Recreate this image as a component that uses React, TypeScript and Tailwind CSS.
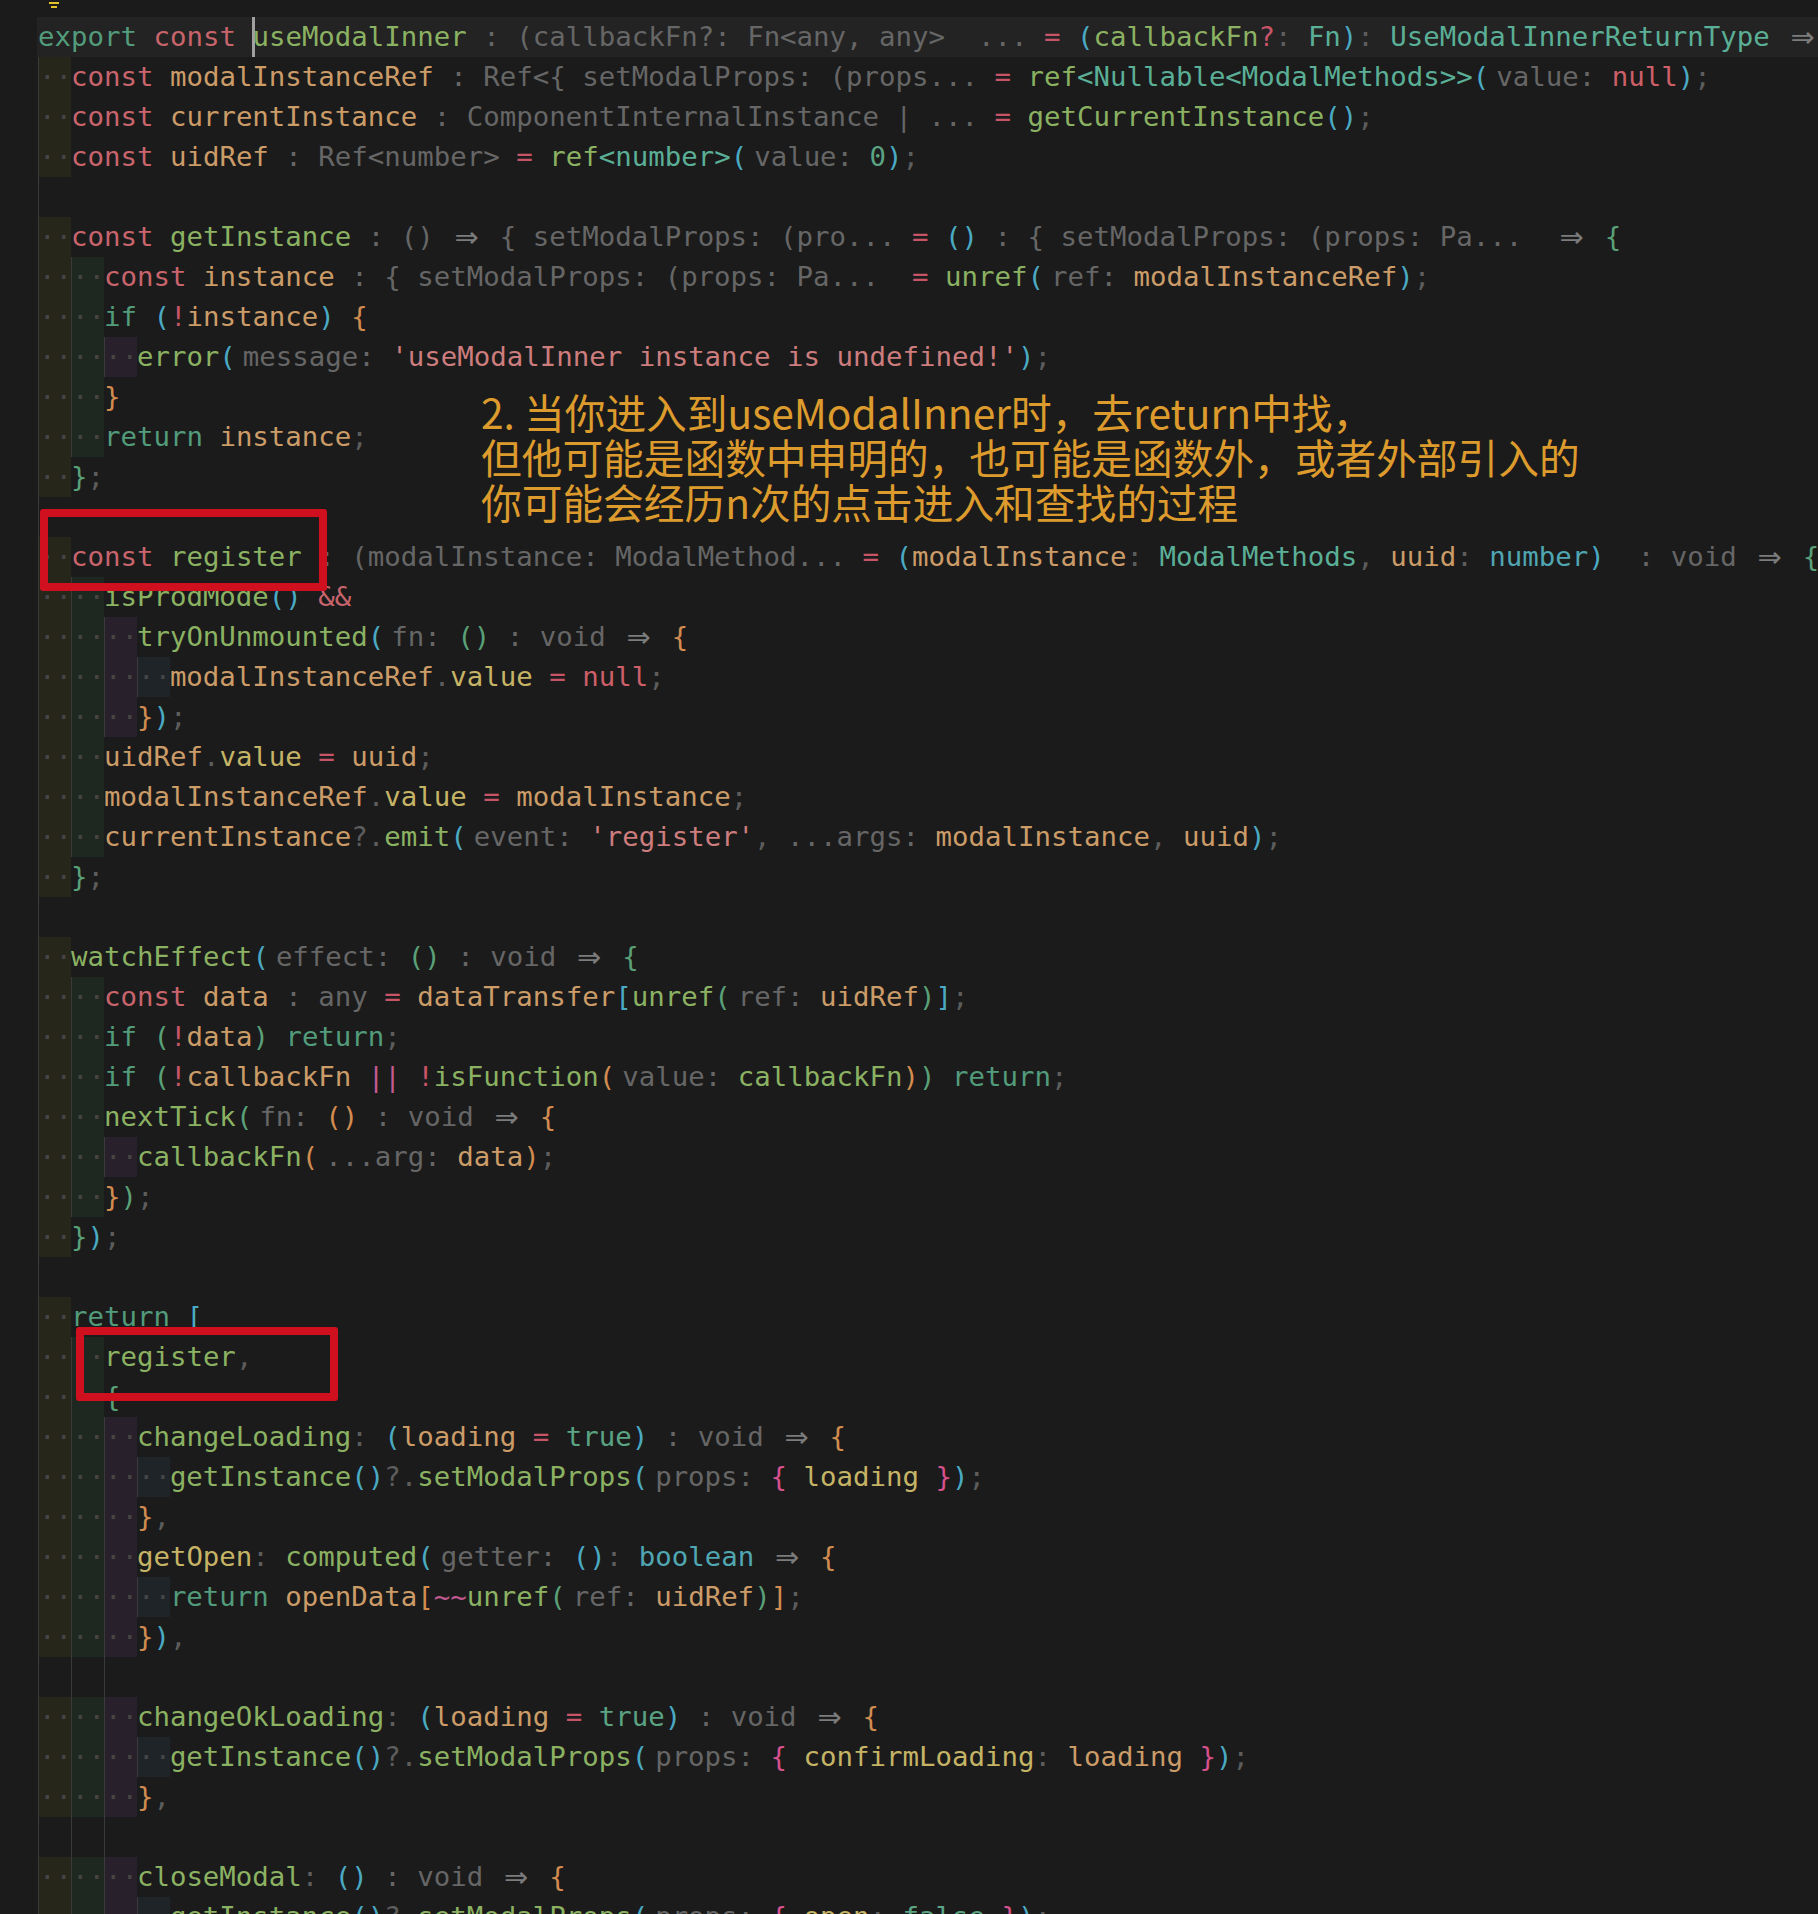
import React from 'react';

type Seg = [string, string];
type Line = { i: number; s: Seg[] };

// token colours, editor theme
const C: Record<string, string> = {
  '': '',
  kw: 'text-[#c8646c]',
  ct: 'text-[#529b7b]',
  fn: 'text-[#8bb262]',
  v: 'text-[#cc9c68]',
  pr: 'text-[#c6b466]',
  ty: 'text-[#5aaf96]',
  tb: 'text-[#50a6b2]',
  h: 'text-[#666666]',
  p: 'text-[#5d5d5d]',
  op: 'text-[#c85468]',
  op2: 'text-[#c45a92]',
  s: 'text-[#cd7d7d]',
  nl: 'text-[#cc5f68]',
  bo: 'text-[#5aa383]',
  b1: 'text-[#4baac3]',
  b2: 'text-[#d28c50]',
  b3: 'text-[#5aa078]',
  b4: 'text-[#d7508c]',
};

const rainbow = ['bg-[#26261b]', 'bg-[#1e2820]', 'bg-[#28202a]', 'bg-[#1e2428]'];

const voidHint: Seg[] = [['h', ' : void '], ['ar', ''], ['', ' ']];

const lines: Line[] = [
  { i: 0, s: [['ct', 'export'], ['', ' '], ['kw', 'const'], ['', ' '], ['cur', ''], ['fn', 'useModalInner'], ['h', ' : (callbackFn?: Fn<any, any>  ... '], ['op', '='], ['', ' '], ['b1', '('], ['fn', 'callbackFn'], ['op', '?'], ['p', ':'], ['', ' '], ['ty', 'Fn'], ['b1', ')'], ['p', ':'], ['', ' '], ['ty', 'UseModalInnerReturnType'], ['', ' '], ['ar', '']] },
  { i: 1, s: [['kw', 'const'], ['', ' '], ['v', 'modalInstanceRef'], ['h', ' : Ref<{ setModalProps: (props... '], ['op', '='], ['', ' '], ['fn', 'ref'], ['ty', '<Nullable<ModalMethods>>'], ['b1', '('], ['ph', 'value:'], ['', ' '], ['nl', 'null'], ['b1', ')'], ['p', ';']] },
  { i: 1, s: [['kw', 'const'], ['', ' '], ['v', 'currentInstance'], ['h', ' : ComponentInternalInstance | ... '], ['op', '='], ['', ' '], ['fn', 'getCurrentInstance'], ['b1', '()'], ['p', ';']] },
  { i: 1, s: [['kw', 'const'], ['', ' '], ['v', 'uidRef'], ['h', ' : Ref<number> '], ['op', '='], ['', ' '], ['fn', 'ref'], ['ty', '<number>'], ['b1', '('], ['ph', 'value:'], ['', ' '], ['bo', '0'], ['b1', ')'], ['p', ';']] },
  { i: 1, s: [] },
  { i: 1, s: [['kw', 'const'], ['', ' '], ['fn', 'getInstance'], ['h', ' : () '], ['ar', ''], ['h', ' { setModalProps: (pro... '], ['op', '='], ['', ' '], ['b1', '()'], ['h', ' : { setModalProps: (props: Pa...  '], ['ar', ''], ['', ' '], ['b3', '{']] },
  { i: 2, s: [['kw', 'const'], ['', ' '], ['v', 'instance'], ['h', ' : { setModalProps: (props: Pa...  '], ['op', '='], ['', ' '], ['fn', 'unref'], ['b1', '('], ['ph', 'ref:'], ['', ' '], ['v', 'modalInstanceRef'], ['b1', ')'], ['p', ';']] },
  { i: 2, s: [['ct', 'if'], ['', ' '], ['b1', '('], ['op', '!'], ['v', 'instance'], ['b1', ')'], ['', ' '], ['b2', '{']] },
  { i: 3, s: [['fn', 'error'], ['b1', '('], ['ph', 'message:'], ['', ' '], ['s', "'useModalInner instance is undefined!'"], ['b1', ')'], ['p', ';']] },
  { i: 2, s: [['b2', '}']] },
  { i: 2, s: [['ct', 'return'], ['', ' '], ['v', 'instance'], ['p', ';']] },
  { i: 1, s: [['b3', '}'], ['p', ';']] },
  { i: 1, s: [] },
  { i: 1, s: [['kw', 'const'], ['', ' '], ['fn', 'register'], ['h', ' : (modalInstance: ModalMethod... '], ['op', '='], ['', ' '], ['b1', '('], ['v', 'modalInstance'], ['p', ':'], ['', ' '], ['ty', 'ModalMethods'], ['p', ','], ['', ' '], ['v', 'uuid'], ['p', ':'], ['', ' '], ['tb', 'number'], ['b1', ')'], ['h', '  : void '], ['ar', ''], ['', ' '], ['b3', '{']] },
  { i: 2, s: [['fn', 'isProdMode'], ['b1', '()'], ['', ' '], ['kw', '&&']] },
  { i: 3, s: [['fn', 'tryOnUnmounted'], ['b1', '('], ['ph', 'fn:'], ['', ' '], ['b3', '()'], ...voidHint, ['b2', '{']] },
  { i: 4, s: [['v', 'modalInstanceRef'], ['p', '.'], ['pr', 'value'], ['', ' '], ['op', '='], ['', ' '], ['nl', 'null'], ['p', ';']] },
  { i: 3, s: [['b2', '}'], ['b1', ')'], ['p', ';']] },
  { i: 2, s: [['v', 'uidRef'], ['p', '.'], ['pr', 'value'], ['', ' '], ['op', '='], ['', ' '], ['v', 'uuid'], ['p', ';']] },
  { i: 2, s: [['v', 'modalInstanceRef'], ['p', '.'], ['pr', 'value'], ['', ' '], ['op', '='], ['', ' '], ['v', 'modalInstance'], ['p', ';']] },
  { i: 2, s: [['v', 'currentInstance'], ['p', '?.'], ['fn', 'emit'], ['b1', '('], ['ph', 'event:'], ['', ' '], ['s', "'register'"], ['p', ','], ['', ' '], ['h', '...args:'], ['', ' '], ['v', 'modalInstance'], ['p', ','], ['', ' '], ['v', 'uuid'], ['b1', ')'], ['p', ';']] },
  { i: 1, s: [['b3', '}'], ['p', ';']] },
  { i: 1, s: [] },
  { i: 1, s: [['fn', 'watchEffect'], ['b1', '('], ['ph', 'effect:'], ['', ' '], ['b3', '()'], ...voidHint, ['b3', '{']] },
  { i: 2, s: [['kw', 'const'], ['', ' '], ['v', 'data'], ['h', ' : any '], ['op', '='], ['', ' '], ['v', 'dataTransfer'], ['b1', '['], ['fn', 'unref'], ['b3', '('], ['ph', 'ref:'], ['', ' '], ['v', 'uidRef'], ['b3', ')'], ['b1', ']'], ['p', ';']] },
  { i: 2, s: [['ct', 'if'], ['', ' '], ['b3', '('], ['op', '!'], ['v', 'data'], ['b3', ')'], ['', ' '], ['ct', 'return'], ['p', ';']] },
  { i: 2, s: [['ct', 'if'], ['', ' '], ['b3', '('], ['op', '!'], ['v', 'callbackFn'], ['', ' '], ['op2', '||'], ['', ' '], ['op', '!'], ['fn', 'isFunction'], ['b2', '('], ['ph', 'value:'], ['', ' '], ['fn', 'callbackFn'], ['b2', ')'], ['b3', ')'], ['', ' '], ['ct', 'return'], ['p', ';']] },
  { i: 2, s: [['fn', 'nextTick'], ['b3', '('], ['ph', 'fn:'], ['', ' '], ['b2', '()'], ...voidHint, ['b2', '{']] },
  { i: 3, s: [['fn', 'callbackFn'], ['b2', '('], ['ph', '...arg:'], ['', ' '], ['v', 'data'], ['b2', ')'], ['p', ';']] },
  { i: 2, s: [['b2', '}'], ['b3', ')'], ['p', ';']] },
  { i: 1, s: [['b3', '}'], ['b1', ')'], ['p', ';']] },
  { i: 1, s: [] },
  { i: 1, s: [['ct', 'return'], ['', ' '], ['b1', '[']] },
  { i: 2, s: [['fn', 'register'], ['p', ',']] },
  { i: 2, s: [['b3', '{']] },
  { i: 3, s: [['fn', 'changeLoading'], ['p', ':'], ['', ' '], ['b1', '('], ['v', 'loading'], ['', ' '], ['op', '='], ['', ' '], ['bo', 'true'], ['b1', ')'], ...voidHint, ['b2', '{']] },
  { i: 4, s: [['fn', 'getInstance'], ['b1', '()'], ['p', '?.'], ['fn', 'setModalProps'], ['b1', '('], ['ph', 'props:'], ['', ' '], ['b4', '{'], ['', ' '], ['pr', 'loading'], ['', ' '], ['b4', '}'], ['b1', ')'], ['p', ';']] },
  { i: 3, s: [['b2', '}'], ['p', ',']] },
  { i: 3, s: [['pr', 'getOpen'], ['p', ':'], ['', ' '], ['fn', 'computed'], ['b1', '('], ['ph', 'getter:'], ['', ' '], ['b1', '()'], ['p', ':'], ['', ' '], ['tb', 'boolean'], ['', ' '], ['ar', ''], ['', ' '], ['b2', '{']] },
  { i: 4, s: [['ct', 'return'], ['', ' '], ['v', 'openData'], ['b2', '['], ['op2', '~~'], ['fn', 'unref'], ['b3', '('], ['ph', 'ref:'], ['', ' '], ['v', 'uidRef'], ['b3', ')'], ['b2', ']'], ['p', ';']] },
  { i: 3, s: [['b2', '}'], ['b1', ')'], ['p', ',']] },
  { i: 3, s: [] },
  { i: 3, s: [['fn', 'changeOkLoading'], ['p', ':'], ['', ' '], ['b1', '('], ['v', 'loading'], ['', ' '], ['op', '='], ['', ' '], ['bo', 'true'], ['b1', ')'], ...voidHint, ['b2', '{']] },
  { i: 4, s: [['fn', 'getInstance'], ['b1', '()'], ['p', '?.'], ['fn', 'setModalProps'], ['b1', '('], ['ph', 'props:'], ['', ' '], ['b4', '{'], ['', ' '], ['pr', 'confirmLoading'], ['p', ':'], ['', ' '], ['v', 'loading'], ['', ' '], ['b4', '}'], ['b1', ')'], ['p', ';']] },
  { i: 3, s: [['b2', '}'], ['p', ',']] },
  { i: 3, s: [] },
  { i: 3, s: [['fn', 'closeModal'], ['p', ':'], ['', ' '], ['b1', '()'], ...voidHint, ['b2', '{']] },
  { i: 4, s: [['fn', 'getInstance'], ['b1', '()'], ['p', '?.'], ['fn', 'setModalProps'], ['b1', '('], ['ph', 'props:'], ['', ' '], ['b4', '{'], ['', ' '], ['pr', 'open'], ['p', ':'], ['', ' '], ['bo', 'false'], ['', ' '], ['b4', '}'], ['b1', ')'], ['p', ';']] },
];

const Token = ({ seg }: { seg: Seg }) => {
  const [k, t] = seg;
  if (k === 'ar')
    return (
      <span className="inline-block w-[2ch] h-[40px] align-top text-center">
        <span className="font-['DejaVu_Sans',sans-serif] text-[29px] text-[#7c7c7c]">⇒</span>
      </span>
    );
  if (k === 'cur') return <span className="inline-block w-[3px] h-[40px] -mr-[3px] align-top bg-[#a0a0a0]" />;
  if (k === 'ph') return <span className="pl-[7px] text-[#666666]">{t}</span>;
  return <span className={C[k]}>{t}</span>;
};

const CodeLine = ({ line, active }: { line: Line; active: boolean }) => {
  const blank = line.s.length === 0;
  return (
    <div className={`ml-[37px] pl-[1px] h-[40px] leading-[40px] whitespace-pre ${active ? 'bg-[#232323]' : ''}`}>
      {Array.from({ length: line.i }).map((_, n) => (
        <span
          key={n}
          className={`inline-block w-[2ch] h-[40px] align-top border-l border-[#3a3a3a] text-[#454545] ${blank ? '' : rainbow[n]}`}
        >
          {blank ? '' : '··'}
        </span>
      ))}
      {line.s.map((seg, n) => (
        <Token key={n} seg={seg} />
      ))}
    </div>
  );
};

export default function App() {
  return (
    <div className="relative w-[1818px] h-[1914px] overflow-hidden bg-[#1b1b1b] font-['DejaVu_Sans_Mono',monospace] text-[27.4px]">
      {/* code lens marker */}
      <div className="h-[17px] pl-[49px] pt-[2px] flex flex-col gap-[2px]">
        <div className="w-[10px] h-[2px] bg-[#e5c22a]" />
        <div className="ml-[2px] w-[6px] h-[2px] bg-[#e5c22a]" />
      </div>

      <div>
        {lines.map((l, n) => (
          <CodeLine key={n} line={l} active={n === 0} />
        ))}
      </div>

      {/* annotation boxes */}
      <div className="absolute left-[40px] top-[509px] w-[287px] h-[82px] border-[8px] border-[#d0101e] rounded-[3px]" />
      <div className="absolute left-[76px] top-[1327px] w-[262px] h-[74px] border-[8px] border-[#d0101e] rounded-[3px]" />

      <div className="absolute left-[481px] top-[389px] font-['Noto_Sans_CJK_SC',sans-serif] text-[40.7px] leading-[45px] text-[#dd9b2d] whitespace-pre">
        <div>2. 当你进入到useModalInner时，去return中找，</div>
        <div>但他可能是函数中申明的，也可能是函数外，或者外部引入的</div>
        <div>你可能会经历n次的点击进入和查找的过程</div>
      </div>
    </div>
  );
}
